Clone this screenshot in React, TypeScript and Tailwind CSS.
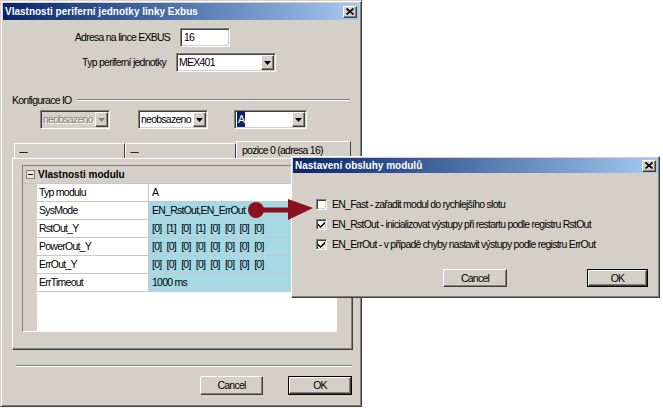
import React from 'react';

const raised =
  'border border-t-white border-l-white border-r-[#404040] border-b-[#404040] shadow-[inset_-1px_-1px_0_#808080]';
const sunken =
  'border border-t-[#808080] border-l-[#808080] border-r-white border-b-white shadow-[inset_1px_1px_0_#404040,inset_-1px_-1px_0_#d4d0c8]';
const bold = 'text-[10px] font-bold tracking-normal';

const CloseButton = () => (
  <div className={`flex h-[12px] w-[14px] items-center justify-center bg-[#d4d0c8] ${raised}`}>
    <svg width="8" height="7" viewBox="0 0 8 7">
      <path d="M0.5 0.5l7 6M7.5 0.5l-7 6" stroke="#000" strokeWidth="1.6" />
    </svg>
  </div>
);

const TitleBar = ({ title, className }: { title: string; className: string }) => (
  <div
    className={`flex items-center justify-between bg-linear-to-r from-[#0a246a] to-[#a6caf0] pr-[2px] pl-[2px] ${className}`}
  >
    <span className={`${bold} text-white`}>{title}</span>
    <CloseButton />
  </div>
);

const DownArrow = ({ disabled }: { disabled?: boolean }) => (
  <svg width="7" height="4" viewBox="0 0 7 4">
    <path d="M0 0h7L3.5 4z" fill={disabled ? '#808080' : '#000'} />
  </svg>
);

const Combo = ({
  value,
  className,
  disabled,
  highlight,
}: {
  value: string;
  className: string;
  disabled?: boolean;
  highlight?: boolean;
}) => (
  <div
    className={`flex h-[19px] items-center ${sunken} ${disabled ? 'bg-[#d4d0c8]' : 'bg-white'} ${className}`}
  >
    <span
      className={`ml-[2px] flex-1 whitespace-nowrap ${disabled ? 'text-[#808080] [text-shadow:1px_1px_0_#fff]' : ''}`}
    >
      {highlight ? <span className="bg-[#0a246a] px-px py-[2px] text-white">{value}</span> : value}
    </span>
    <div
      className={`mr-px flex h-[15px] w-[13px] shrink-0 items-center justify-center bg-[#d4d0c8] ${raised}`}
    >
      <DownArrow disabled={disabled} />
    </div>
  </div>
);

const Button = ({
  label,
  className,
  isDefault,
}: {
  label: string;
  className: string;
  isDefault?: boolean;
}) =>
  isDefault ? (
    <div className={`border border-black ${className}`}>
      <div className={`flex h-full w-full items-center justify-center bg-[#d4d0c8] ${raised}`}>
        {label}
      </div>
    </div>
  ) : (
    <div className={`flex items-center justify-center bg-[#d4d0c8] ${raised} ${className}`}>
      {label}
    </div>
  );

const Checkbox = ({ checked }: { checked?: boolean }) => (
  <div className={`flex h-[11px] w-[11px] shrink-0 items-center justify-center bg-white ${sunken}`}>
    {checked && (
      <svg width="7" height="7" viewBox="0 0 7 7">
        <path d="M0 2.5L2.5 5L7 0.5V3L2.5 7L0 4.5Z" fill="#000" />
      </svg>
    )}
  </div>
);

const properties = [
  { name: 'Typ modulu', value: 'A', plain: true },
  { name: 'SysMode', value: 'EN_RstOut,EN_ErrOut' },
  { name: 'RstOut_Y', value: '[0] [1] [0] [1] [0] [0] [0] [0]', bits: true },
  { name: 'PowerOut_Y', value: '[0] [0] [0] [0] [0] [0] [0] [0]', bits: true },
  { name: 'ErrOut_Y', value: '[0] [0] [0] [0] [0] [0] [0] [0]', bits: true },
  { name: 'ErrTimeout', value: '1000 ms' },
];

const PropertyGrid = () => (
  <div className="flex h-[167px] w-[315px] flex-col border border-t-[#808080] border-l-[#808080] border-r-white border-b-white bg-white">
    <div className="flex h-[18px] items-center border-b border-[#c8c8c8] bg-[#d4d0c8]">
      <div className="flex w-[14px] justify-center">
        <div className="flex h-[9px] w-[9px] items-center justify-center border border-[#808080] bg-[#ece9e4]">
          <div className="h-px w-[5px] bg-black" />
        </div>
      </div>
      <span className={`${bold} ml-px`}>Vlastnosti modulu</span>
    </div>
    {properties.map((row) => (
      <div key={row.name} className="flex h-[18px]">
        <div className="w-[14px] bg-[#d4d0c8]" />
        <div className="flex w-[112px] items-center border-r border-b border-[#c8c8c8] pl-[2px]">
          {row.name}
        </div>
        <div
          className={`flex flex-1 items-center border-b border-[#c8c8c8] pl-[3px] whitespace-nowrap ${row.bits ? '[word-spacing:3px]' : ''} ${row.plain ? 'bg-white' : 'bg-[#a6d9e6]'}`}
        >
          {row.value}
        </div>
      </div>
    ))}
    <div className="flex flex-1">
      <div className="w-[14px] bg-[#d4d0c8]" />
    </div>
  </div>
);

const Tab = ({ label, className, selected }: { label: string; className: string; selected?: boolean }) => (
  <div
    className={`flex items-center border-t border-r border-l border-t-white border-r-[#404040] border-l-white bg-[#d4d0c8] ${selected ? 'h-[17px] pl-[5px]' : 'h-[15px] pl-[4px]'} ${className}`}
  >
    {label}
  </div>
);

const MainDialog = () => (
  <div className="flex h-[407px] w-[362px] flex-col border border-t-[#d4d0c8] border-r-[#404040] border-b-[#404040] border-l-[#d4d0c8] bg-[#d4d0c8] p-[2px] shadow-[inset_1px_1px_0_#fff,inset_-1px_-1px_0_#808080]">
    <TitleBar title="Vlastnosti periferní jednotky linky Exbus" className="h-[17px]" />

    <div className="mt-[8px] flex h-[19px] items-center">
      <span className="w-[167px] text-right">Adresa na lince EXBUS</span>
      <div className={`ml-[10px] flex h-[19px] w-[50px] items-center bg-white pl-[3px] ${sunken}`}>16</div>
    </div>

    <div className="mt-[6px] flex h-[19px] items-center">
      <span className="w-[163px] text-right">Typ periferní jednotky</span>
      <Combo value="MEX401" className="ml-[10px] w-[100px]" />
    </div>

    <div className="mt-[21px] flex h-[14px] items-center pr-[9px] pl-[9px]">
      <span>Konfigurace IO</span>
      <div className="ml-[5px] h-[2px] flex-1 border-t border-b border-t-[#808080] border-b-white" />
    </div>

    <div className="mt-[3px] flex pl-[37px]">
      <Combo value="neobsazeno" className="w-[70px]" disabled />
      <Combo value="neobsazeno" className="ml-[28px] w-[70px]" />
      <Combo value="A" className="ml-[26px] w-[73px]" highlight />
    </div>

    <div className="mt-[13px] ml-[9px] flex h-[16px] items-end">
      <Tab label="---" className="ml-[2px] w-[111px]" />
      <Tab label="---" className="w-[111px]" />
      <Tab label="pozice 0 (adresa 16)" className="w-[115px]" selected />
    </div>

    <div className={`ml-[9px] h-[192px] w-[341px] pt-[6px] pl-[9px] ${raised}`}>
      <PropertyGrid />
    </div>

    <div className="mt-[15px] ml-[13px] h-[2px] w-[336px] border-t border-b border-t-[#808080] border-b-white" />

    <div className="mt-[9px] flex justify-end pr-[7px]">
      <Button label="Cancel" className="h-[19px] w-[63px]" />
      <Button label="OK" className="ml-[25px] h-[19px] w-[64px]" isDefault />
    </div>
  </div>
);

const options = [
  { label: 'EN_Fast - zařadit modul do rychlejšího slotu', checked: false },
  { label: 'EN_RstOut - inicializovat výstupy při restartu podle registru RstOut', checked: true },
  { label: 'EN_ErrOut - v případě chyby nastavit výstupy podle registru ErrOut', checked: true },
];

const ModuleDialog = () => (
  <div
    className={`absolute top-[156px] left-[291px] flex h-[142px] w-[369px] flex-col bg-[#d4d0c8] p-px ${raised}`}
  >
    <TitleBar title="Nastavení obsluhy modulů" className="h-[15px]" />
    <div className="mt-[21px] flex flex-col pl-[23px]">
      {options.map((o) => (
        <div key={o.label} className="flex h-[20px] items-center">
          <Checkbox checked={o.checked} />
          <span className="ml-[5px] whitespace-nowrap">{o.label}</span>
        </div>
      ))}
    </div>
    <div className="mt-[15px] flex pl-[150px]">
      <Button label="Cancel" className="h-[18px] w-[64px]" />
      <Button label="OK" className="ml-[80px] h-[18px] w-[61px]" isDefault />
    </div>
  </div>
);

const Arrow = () => (
  <svg className="absolute top-[196px] left-[246px]" width="70" height="28" viewBox="0 0 70 28">
    <circle cx="10" cy="14" r="8" fill="#8b1020" />
    <rect x="10" y="11.5" width="36" height="5" fill="#8b1020" />
    <path d="M42 3L67 12L42 24Z" fill="#8b1020" />
  </svg>
);

export default function App() {
  return (
    <div className="relative h-[408px] w-[663px] overflow-hidden bg-white font-['Liberation_Sans',Arial,sans-serif] text-[10.5px] leading-none tracking-[-0.75px] text-black">
      <MainDialog />
      <ModuleDialog />
      <Arrow />
    </div>
  );
}
